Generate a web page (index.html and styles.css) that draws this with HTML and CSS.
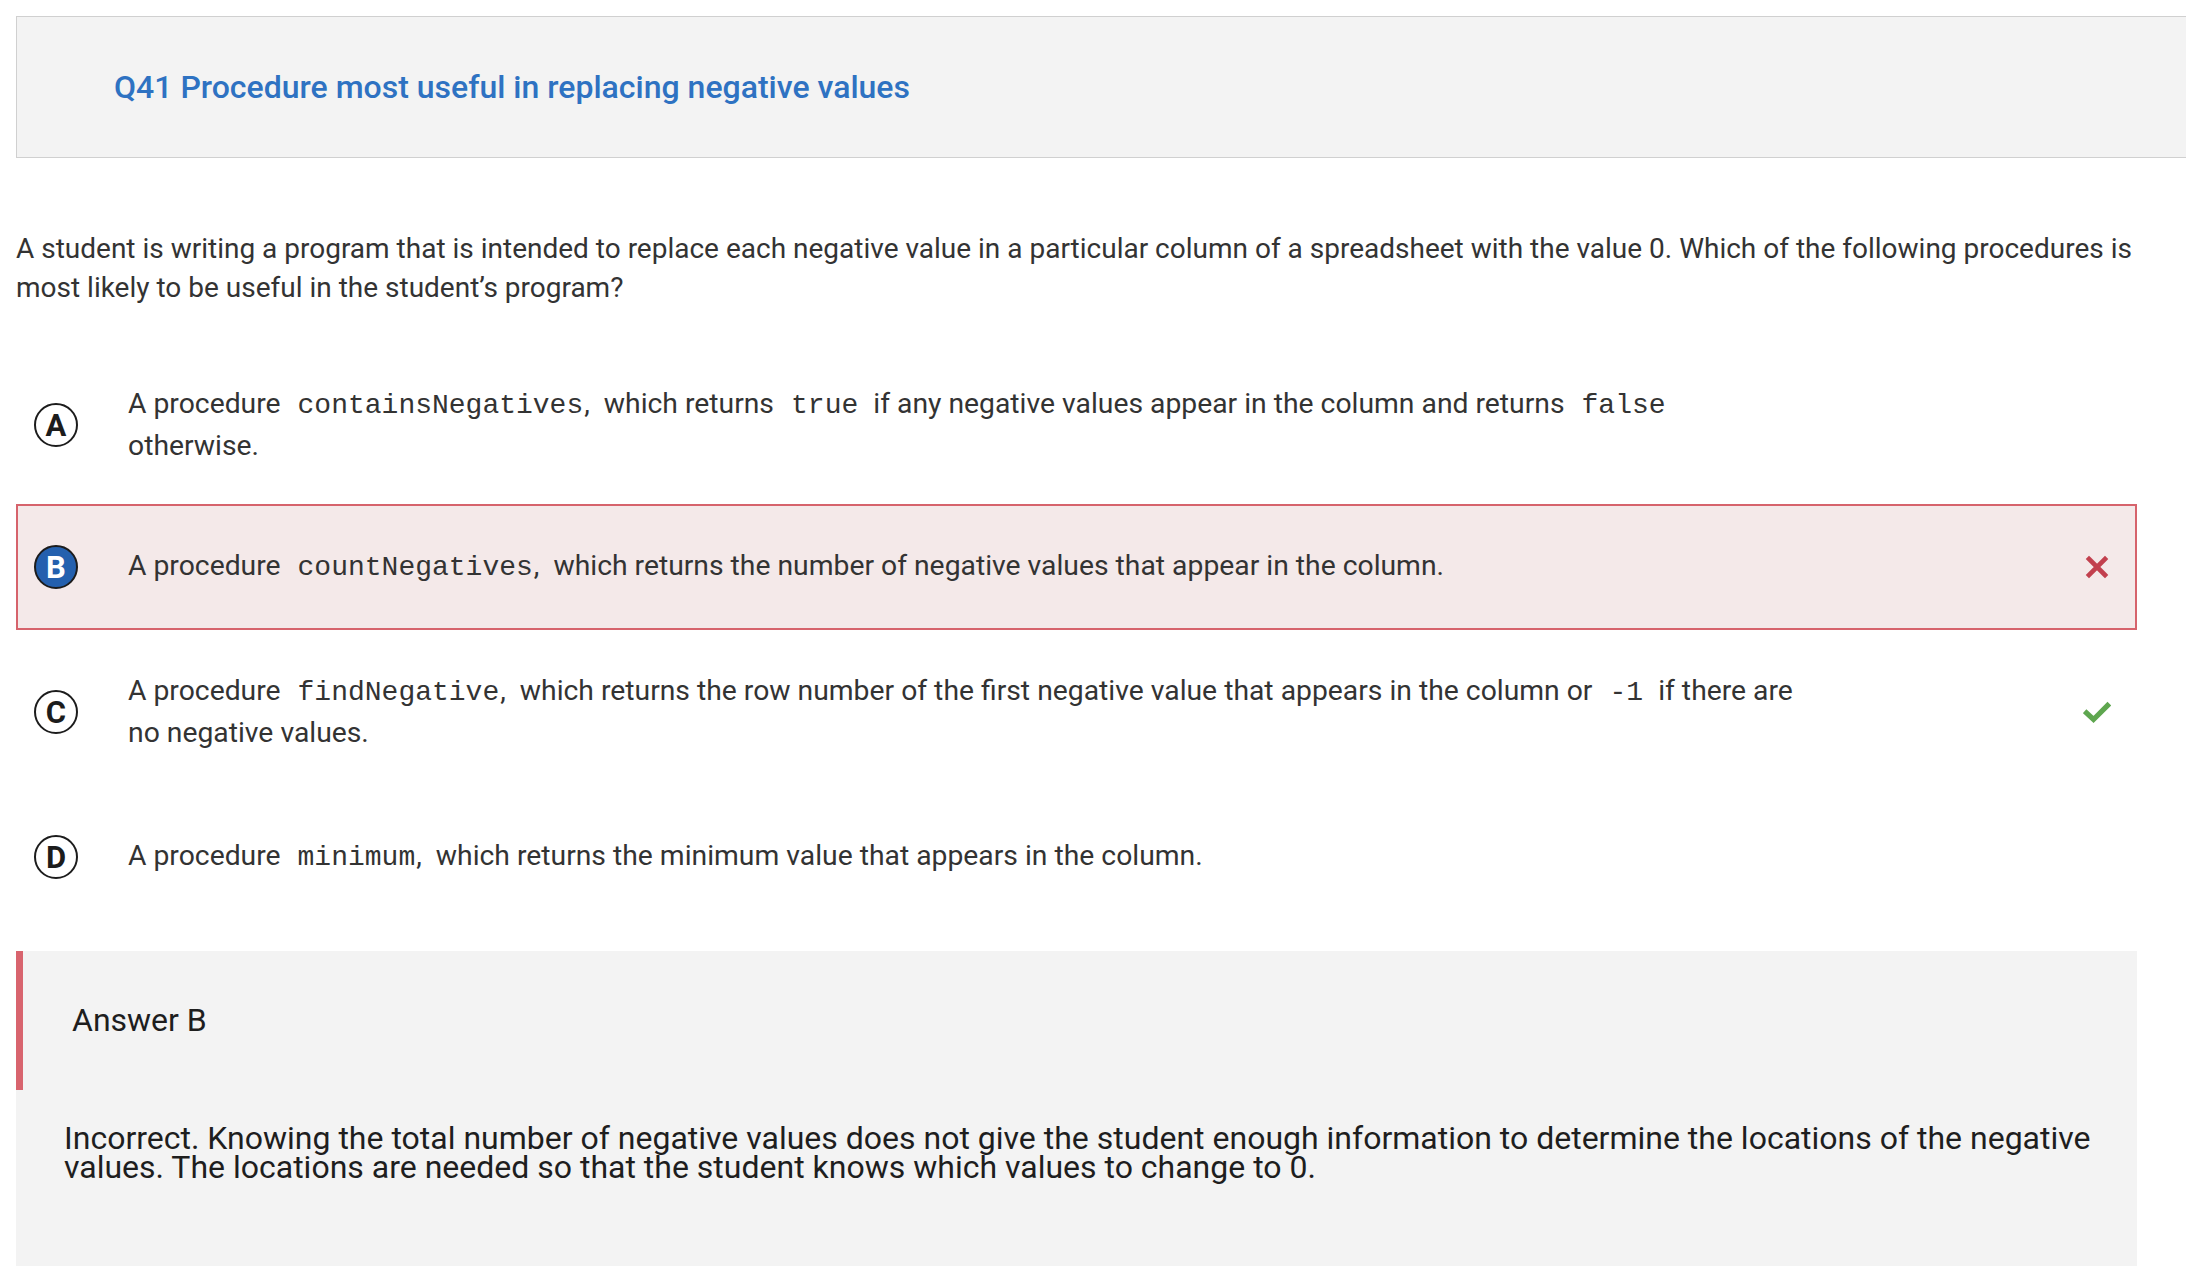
FILE: index.html
```html
<!DOCTYPE html>
<html lang="en">
<head>
<meta charset="utf-8">
<title>Q41 Procedure most useful in replacing negative values</title>
<link rel="stylesheet" href="styles.css">
</head>
<body>
<div class="page">
  <header class="q-header">
    <h1 class="q-title">Q41 Procedure most useful in replacing negative values</h1>
  </header>

  <main class="content">
    <p class="stem">A student is writing a program that is intended to replace each negative value in a particular column of a spreadsheet with the value 0. Which of the following procedures is most likely to be useful in the student’s program?</p>

    <div class="options">
      <div class="option first">
        <span class="letter">A</span>
        <div class="opt-text">A procedure&nbsp; <code>containsNegatives</code>,&nbsp; which returns&nbsp; <code>true</code>&nbsp; if any negative values appear in the column and returns&nbsp; <code>false</code><br>otherwise.</div>
        <span class="mark"></span>
      </div>

      <div class="option selected wrong">
        <span class="letter filled">B</span>
        <div class="opt-text">A procedure&nbsp; <code>countNegatives</code>,&nbsp; which returns the number of negative values that appear in the column.</div>
        <span class="mark">
          <svg class="icon-x" viewBox="0 0 24 24" width="24" height="24" aria-hidden="true">
            <path d="M4 4 L20 20 M20 4 L4 20" stroke="#c2404e" stroke-width="4.6" stroke-linecap="square" fill="none"/>
          </svg>
        </span>
      </div>

      <div class="option">
        <span class="letter">C</span>
        <div class="opt-text">A procedure&nbsp; <code>findNegative</code>,&nbsp; which returns the row number of the first negative value that appears in the column or&nbsp; <code>-1</code>&nbsp; if there are<br>no negative values.</div>
        <span class="mark">
          <svg class="icon-check" viewBox="0 0 28 24" width="28" height="24" aria-hidden="true">
            <path d="M3.5 13 L10.5 19.5 L24.5 5.5" stroke="#5ea64f" stroke-width="5.2" stroke-linecap="square" stroke-linejoin="miter" fill="none"/>
          </svg>
        </span>
      </div>

      <div class="option">
        <span class="letter">D</span>
        <div class="opt-text">A procedure&nbsp; <code>minimum</code>,&nbsp; which returns the minimum value that appears in the column.</div>
        <span class="mark"></span>
      </div>
    </div>

    <section class="answer">
      <div class="answer-head">Answer B</div>
      <p class="answer-body">Incorrect. Knowing the total number of negative values does not give the student enough information to determine the locations of the negative values. The locations are needed so that the student knows which values to change to 0.</p>
    </section>
  </main>
</div>
</body>
</html>
```

FILE: styles.css
```css
html, body {
  margin: 0;
  padding: 0;
  overflow: hidden;
  background: #ffffff;
}

body {
  font-family: Roboto, "Liberation Sans", Arial, sans-serif;
  color: #333333;
}

.page {
  padding: 16px 0 0 16px;
}

.q-header {
  margin-right: -40px;
  height: 140px;
  box-sizing: content-box;
  background: #f3f3f3;
  border: 1px solid #d0d0d0;
  border-right: none;
  display: flex;
  align-items: center;
}

.q-title {
  margin: 0 0 0 97px;
  font-size: 32px;
  font-weight: 500;
  color: #2e72c2;
  line-height: 40px;
}

.content {
  padding-right: 49px;
}

.stem {
  margin: 71px 0 0 0;
  font-size: 28px;
  line-height: 39px;
  color: #333333;
}

.options {
  margin-top: 33px;
  display: flex;
  flex-direction: column;
}

.option {
  display: flex;
  align-items: center;
  padding: 39px 0 39px 16px;
  border: 2px solid transparent;
}

.option.first {
  padding-top: 42px;
  padding-bottom: 36px;
}

.option.selected.wrong {
  background: #f4e9e9;
  border-color: #d6636c;
}

.letter {
  flex: 0 0 auto;
  width: 40px;
  height: 40px;
  border: 2px solid #1c1c1c;
  border-radius: 50%;
  display: flex;
  align-items: center;
  justify-content: center;
  font-size: 31px;
  font-weight: 700;
  color: #1c1c1c;
  line-height: 1;
}

.letter.filled {
  background: #2460ae;
  color: #ffffff;
}

.opt-text {
  flex: 0 1 auto;
  margin-left: 50px;
  font-size: 28.3px;
  line-height: 40px;
  color: #333333;
}

code {
  font-family: "Liberation Mono", "Courier New", monospace;
  font-size: 28px;
  color: #333333;
  margin: 0 1px 0 3px;
}

.mark {
  margin-left: auto;
  flex: 0 0 auto;
  width: 40px;
  margin-right: 18px;
  display: flex;
  align-items: center;
  justify-content: center;
}

.answer {
  margin-top: 31px;
  background: #f3f3f3;
  padding-bottom: 120px;
}

.answer-head {
  height: 139px;
  border-left: 7px solid #d8646e;
  display: flex;
  align-items: center;
  padding-left: 49px;
  padding-bottom: 2px;
  box-sizing: border-box;
  font-size: 32px;
  color: #1e1e1e;
}

.answer-body {
  margin: 34px 30px 0 48px;
  font-size: 32px;
  line-height: 29px;
  color: #1e1e1e;
}
```
